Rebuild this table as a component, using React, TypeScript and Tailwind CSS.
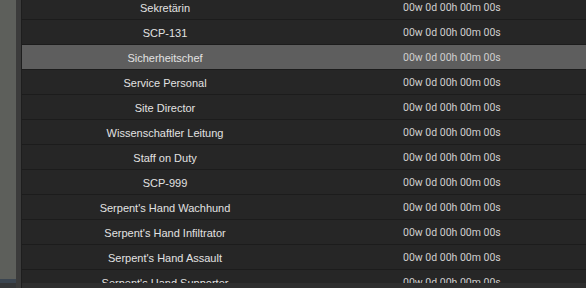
import React from "react";

const ROWS = [
  "Sekretärin",
  "SCP-131",
  "Sicherheitschef",
  "Service Personal",
  "Site Director",
  "Wissenschaftler Leitung",
  "Staff on Duty",
  "SCP-999",
  "Serpent's Hand Wachhund",
  "Serpent's Hand Infiltrator",
  "Serpent's Hand Assault",
  "Serpent's Hand Supporter",
];

export default function App() {
  return (
    <div className="flex h-[288px] w-[586px] overflow-hidden bg-[#2c2c2c]">
      {/* world behind the menu */}
      <div className="flex w-[16px] flex-col">
        <div className="h-[279px] bg-[#5d5f5b]" />
        <div className="h-[4px] bg-[#3b4550]" />
        <div className="flex-1 bg-[#343638]" />
      </div>
      {/* panel frame */}
      <div className="w-[5px] bg-[#3b3b3b]" />
      <div className="w-[1px] bg-[#1e1e1e]" />
      <div className="flex flex-1 flex-col">
        <div className="h-[283px] overflow-hidden bg-[#262626]">
          <div className="-mt-[5px] flex flex-col">
            {ROWS.map((name, i) => (
              <div
                key={name}
                className={`flex h-[25px] shrink-0 items-center border-b border-[#1c1c1c] pt-[2px] ${
                  i === 2 ? "bg-[#5e5e5e]" : "bg-[#262626]"
                }`}
              >
                <div
                  className="w-[286px] text-center text-[11px] text-[#e2e2e2]"
                  style={{ fontFamily: "'Liberation Sans', Arial, sans-serif" }}
                >
                  {name}
                </div>
                <div
                  className="pl-[95px] text-[10.5px] text-[#cfcfcf]"
                  style={{ fontFamily: "Roboto, 'Noto Sans', sans-serif" }}
                >
                  00w 0d 00h 00m 00s
                </div>
              </div>
            ))}
          </div>
        </div>
        <div className="flex-1 bg-[#2e2e2e]" />
      </div>
    </div>
  );
}
